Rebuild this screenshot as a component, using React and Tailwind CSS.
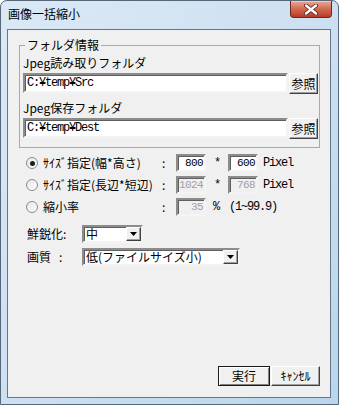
import React from "react";

const mono = "font-['Liberation_Mono',monospace] text-[12px] tracking-[-1.2px]";
const num = "font-['Liberation_Mono',monospace] text-[11px] tracking-[-0.6px]";

function Radio({ checked }) {
  return (
    <span className="w-[12px] h-[12px] rounded-full border border-[#8a8d91] bg-gradient-to-br from-[#e6e6e6] to-[#ffffff] flex items-center justify-center shrink-0">
      {checked && <span className="w-[5px] h-[5px] rounded-full bg-[#1d1d1d]" />}
    </span>
  );
}

function NumBox({ value, disabled }) {
  return (
    <div
      className={`w-[30px] h-[18px] border-2 border-t-[#8c8c8c] border-l-[#8c8c8c] border-b-[#f4f4f4] border-r-[#f4f4f4] shadow-[inset_1px_1px_0_#5f5f5f] flex items-center justify-end pr-[1px] ${num} ${
        disabled ? "bg-[#f0f0f0] text-[#a0a0a0]" : "bg-white text-black"
      }`}
    >
      {value}
    </div>
  );
}

function Combo({ width, value }) {
  return (
    <div
      className={`${width} h-[18px] bg-white border-2 border-t-[#8c8c8c] border-l-[#8c8c8c] border-b-[#f4f4f4] border-r-[#f4f4f4] shadow-[inset_1px_1px_0_#5f5f5f] flex items-center`}
    >
      <span className="flex-1 pl-[2px] text-[12px] leading-[14px]">{value}</span>
      <span className="w-[15px] h-[14px] bg-[#f0f0f0] border border-t-white border-l-white border-b-[#404040] border-r-[#404040] shadow-[inset_-1px_-1px_0_#a0a0a0] flex items-center justify-center">
        <svg width="7" height="4" viewBox="0 0 7 4">
          <path d="M0 0h7L3.5 4z" fill="#000" />
        </svg>
      </span>
    </div>
  );
}

function PathRow({ value }) {
  return (
    <div className="flex gap-[1px] items-start">
      <div
        className={`w-[265px] h-[20px] bg-white border-2 border-t-[#8c8c8c] border-l-[#8c8c8c] border-b-[#f4f4f4] border-r-[#f4f4f4] shadow-[inset_1px_1px_0_#5f5f5f] flex items-center pl-[2px] ${mono}`}
      >
        {value}
      </div>
      <button className="w-[29px] h-[21px] bg-[#f0f0f0] border border-t-white border-l-white border-b-[#404040] border-r-[#404040] shadow-[inset_-1px_-1px_0_#a0a0a0] text-[12px] leading-[14px]">
        参照
      </button>
    </div>
  );
}

export default function App() {
  return (
    <div className="w-[339px] h-[405px] flex flex-col rounded-t-[7px] border border-[#56677a] bg-gradient-to-br from-[#dbe9f6] via-[#cde0f1] to-[#b9d6ec] font-['Noto_Sans_CJK_JP','Liberation_Sans',sans-serif] text-black">
      <div className="h-[28px] flex items-start">
        <span className="pl-[7px] pt-[5px] text-[12px] leading-[16px]">画像一括縮小</span>
        <div className="ml-auto mr-[6px] w-[42px] h-[17px] rounded-b-[4px] border border-t-0 border-[#6d2a1c] bg-gradient-to-b from-[#e9a897] via-[#d16a52] to-[#b83a22] shadow-[inset_0_1px_0_#f3c7bb] flex items-center justify-center">
          <svg width="14" height="11" viewBox="0 0 14 11">
            <path d="M2 1.5L12 9.5M12 1.5L2 9.5" stroke="#5a1d12" strokeWidth="4" strokeLinecap="round" />
            <path d="M2 1.5L12 9.5M12 1.5L2 9.5" stroke="#ffffff" strokeWidth="2.4" strokeLinecap="round" />
          </svg>
        </div>
      </div>

      <div className="ml-[6px] w-[324px] h-[369px] border border-[#66768a] bg-[#f0f0f0] flex flex-col text-[12px] leading-[14px]">
        <fieldset className="mt-[8px] ml-[11px] w-[301px] border border-[#a9a9a9] pl-[3px] pr-0 pt-[4px] pb-[8px]">
          <legend className="ml-[2px] px-[2px] leading-[14px]">フォルダ情報</legend>
          <div className="leading-[14px]">Jpeg読み取りフォルダ</div>
          <div className="mt-[3px]">
            <PathRow value="C:¥temp¥Src" />
          </div>
          <div className="mt-[7px] leading-[14px]">Jpeg保存フォルダ</div>
          <div className="mt-[3px]">
            <PathRow value="C:¥temp¥Dest" />
          </div>
        </fieldset>

        <div className="mt-[6px] pl-[18px] flex flex-col gap-[4px]">
          <div className="h-[18px] flex items-center">
            <Radio checked />
            <span className="ml-[5px] w-[119px]">ｻｲｽﾞ指定(幅*高さ)</span>
            <span className="w-[6px]">:</span>
            <span className="ml-[8px]"><NumBox value="800" /></span>
            <span className={`w-[22px] text-center ${mono}`}>*</span>
            <NumBox value="600" />
            <span className={`ml-[5px] ${mono}`}>Pixel</span>
          </div>
          <div className="h-[18px] flex items-center">
            <Radio />
            <span className="ml-[5px] w-[119px]">ｻｲｽﾞ指定(長辺*短辺)</span>
            <span className="w-[6px]">:</span>
            <span className="ml-[8px]"><NumBox value="1024" disabled /></span>
            <span className={`w-[22px] text-center ${mono}`}>*</span>
            <NumBox value="768" disabled />
            <span className={`ml-[5px] ${mono}`}>Pixel</span>
          </div>
          <div className="h-[18px] flex items-center">
            <Radio />
            <span className="ml-[5px] w-[119px]">縮小率</span>
            <span className="w-[6px]">:</span>
            <span className="ml-[8px]"><NumBox value="35" disabled /></span>
            <span className={`ml-[7px] ${mono}`}>%</span>
            <span className={`ml-[10px] ${mono}`}>(1~99.9)</span>
          </div>
        </div>

        <div className="mt-[9px] pl-[19px] flex items-center h-[18px]">
          <span className="w-[55px]">鮮鋭化:</span>
          <Combo width="w-[61px]" value="中" />
        </div>
        <div className="mt-[5px] pl-[19px] flex items-center h-[18px]">
          <span className="w-[55px]">
            画質<span className="ml-[8px]">:</span>
          </span>
          <Combo width="w-[158px]" value="低(ファイルサイズ小)" />
        </div>

        <div className="flex-1" />
        <div className="flex justify-end gap-[1px] pr-[10px] pb-[11px]">
          <button className="w-[52px] h-[20px] bg-[#f0f0f0] border border-[#1a1a1a] shadow-[inset_1px_1px_0_#ffffff,inset_-1px_-1px_0_#808080] text-[12px] leading-[14px]">
            実行
          </button>
          <button className="w-[49px] h-[20px] bg-[#f0f0f0] border border-t-white border-l-white border-b-[#404040] border-r-[#404040] shadow-[inset_-1px_-1px_0_#a0a0a0] text-[12px] leading-[14px]">
            ｷｬﾝｾﾙ
          </button>
        </div>
      </div>
    </div>
  );
}
